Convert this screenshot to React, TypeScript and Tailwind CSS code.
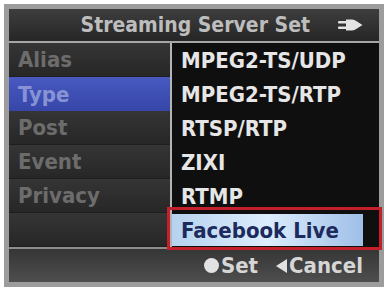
import React from 'react';

const leftRows = ['Alias', 'Type', 'Post', 'Event', 'Privacy', ''];
const menuItems = ['MPEG2-TS/UDP', 'MPEG2-TS/RTP', 'RTSP/RTP', 'ZIXI', 'RTMP', 'Facebook Live'];

const PlugArrow = () => (
  <svg width="25" height="14" viewBox="0 0 25 14" className="block">
    <rect x="0" y="3" width="9" height="2.4" rx="1" fill="#e4e4e4" />
    <rect x="0" y="8.6" width="9" height="2.4" rx="1" fill="#e4e4e4" />
    <path d="M8 1.5 C 13 1.5 16 1 19 3.5 L 24.5 7 L 19 10.5 C 16 13 13 12.5 8 12.5 Z" fill="#e4e4e4" />
  </svg>
);

export default function App() {
  return (
    <div className="h-[289px] w-[387px] bg-white pl-[4px] pt-[4px] font-['DejaVu_Sans_Condensed','DejaVu_Sans',sans-serif] font-bold">
      <div className="relative flex h-[283px] w-[380px] flex-col border-[5px] border-[#9c9c9c] bg-[#1c1c1c] shadow-[inset_0_0_0_1px_#3a3a3a]">
        {/* header */}
        <div className="flex h-[32px] items-center justify-end gap-[28px] bg-gradient-to-b from-[#3e3e3e] to-[#262626] pr-[16px]">
          <span className="text-[21px] leading-none text-[#bdbdbd]">Streaming Server Set</span>
          <PlugArrow />
        </div>
        <div className="h-[2px] bg-[#a6a6a6]" />

        {/* body */}
        <div className="flex h-[204px]">
          <div className="flex w-[161px] flex-col">
            {leftRows.map((label) =>
              label === 'Type' ? (
                <div
                  key={label}
                  className="flex h-[34px] items-center bg-gradient-to-b from-[#4859c0] to-[#3646a8] pl-[9px] text-[22px] text-[#8893d6]"
                >
                  {label}
                </div>
              ) : (
                <div
                  key={label || 'blank'}
                  className="flex h-[34px] items-center border-b border-[#1e1e1e] bg-gradient-to-b from-[#353535] to-[#272727] pl-[9px] text-[22px] text-[#6c6c6c]"
                >
                  {label}
                </div>
              )
            )}
          </div>

          <div className="flex flex-1 border-l-2 border-[#b4b4b4] bg-[#0f0f0f]">
            <div className="flex w-[191px] flex-col">
              {menuItems.map((item) =>
                item === 'Facebook Live' ? (
                  <div key={item} className="flex h-[34px] items-center py-[1px]">
                    <div className="flex h-full w-full items-center bg-gradient-to-r from-[#b6d2ef] via-[#dcedfb] to-[#9fbfe8] pl-[9px] text-[22px] text-[#1d2b5c]">
                      {item}
                    </div>
                  </div>
                ) : (
                  <div key={item} className="flex h-[34px] items-center pl-[9px] text-[22px] text-[#e6e6e6]">
                    {item}
                  </div>
                )
              )}
            </div>
          </div>
        </div>

        <div className="h-[2px] bg-[#8e8e8e]" />

        {/* footer */}
        <div className="flex flex-1 items-center justify-end bg-gradient-to-b from-[#363636] to-[#4e4e4e] pr-[16px] text-[22px] leading-none text-[#d6d6d6]">
          <span className="mr-[2px] inline-block h-[15px] w-[15px] rounded-full bg-[#e2e2e2]" />
          <span>Set</span>
          <span className="ml-[18px] mr-[2px] inline-block h-0 w-0 border-y-[7px] border-r-[11px] border-y-transparent border-r-[#e2e2e2]" />
          <span>Cancel</span>
        </div>

        {/* red annotation box */}
        <div className="pointer-events-none absolute left-[158px] top-[198px] h-[43px] w-[215px] border-[3px] border-[#c4202c]" />
      </div>
    </div>
  );
}
